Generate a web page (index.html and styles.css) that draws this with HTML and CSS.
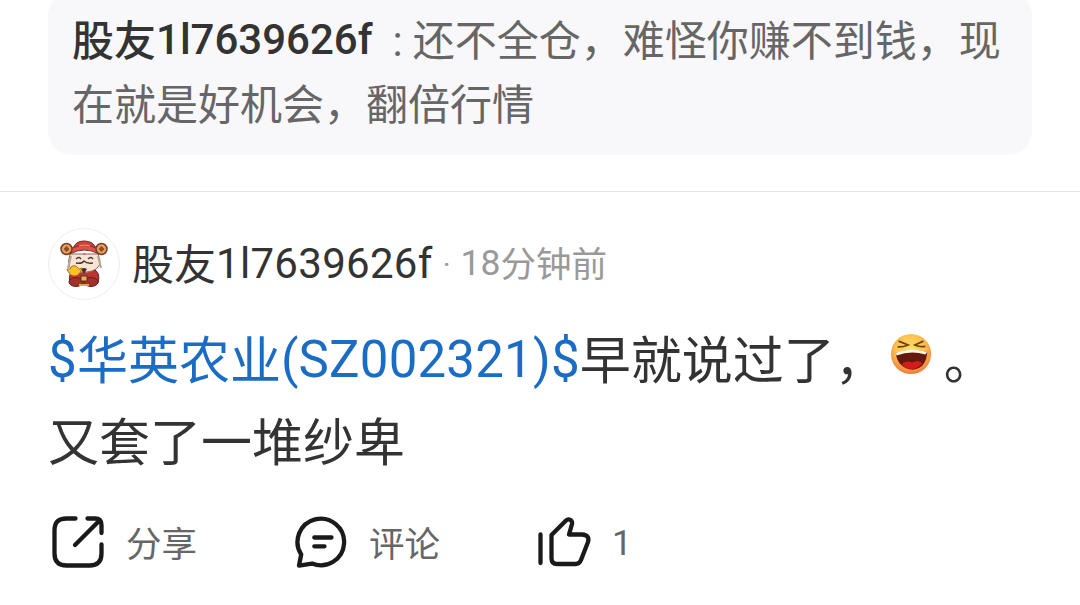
FILE: index.html
```html
<!DOCTYPE html>
<html lang="zh-CN">
  <head>
    <meta charset="UTF-8" />
    <meta name="viewport" content="width=device-width, initial-scale=1.0" />
    <title>股吧评论</title>
    <link rel="stylesheet" href="styles.css">
  </head>
  <body>
    <div class="quote">
      <p><span class="quote-name">股友</span><span class="quote-name num">1l7639626f</span><span class="colon">:</span><span>还不全仓，难怪你赚不到钱，现在就是好机会，翻倍行情</span></p>
    </div>

    <div class="post">
      <div class="user">
        <div class="avatar">
          <svg width="72" height="72" viewBox="0 0 72 72">
            <!-- body -->
            <path d="M25 42Q20 46 22 55L27 57L45 57L50 55Q53 44 45 41Z" fill="#b9372f" stroke="#5c2522" />
            <ellipse cx="28" cy="54" rx="7" ry="4.500" fill="#a52f2b" stroke="#5c2522" />
            <ellipse cx="43" cy="54" rx="7" ry="4.500" fill="#a52f2b" stroke="#5c2522" />
            <rect x="33" y="48" width="6" height="5" fill="#e4b35b" stroke="#603121" />
            <path d="M31 57h10" stroke="#e0a050" stroke-width="2" />
            <!-- head -->
            <path d="M22 26Q17 42 29 43Q36 46 44 43Q56 39 50 26Z" fill="#fbe4d4" stroke="#8a6a60" />
            <path d="M23 28L20 40M50 28L53 40" stroke="#b5a49c" stroke-width="2" />
            <path d="M28 31q3-3 5 0M40 31q3-3 5 0M28 35q6 1 8-2q3 3 9 2" fill="none" stroke="#4f3835" stroke-width="1.4" />
            <circle cx="36.500" cy="26" r="1" fill="#d85042" />
            <path d="M33 41q3-2 6 0l-3 5z" fill="#453032" />
            <!-- hat -->
            <path d="M25 21Q27 13 36 13Q46 13 48 21Z" fill="#c9423b" stroke="#6e2925" />
            <path d="M22 26Q36 18 51 26L49 20Q36 15 24 20Z" fill="#dc5149" stroke="#792f29" />
            <path d="M31 18q6-2 11 0" fill="none" stroke="#edaa68" />
            <circle cx="18.500" cy="21" r="5.500" fill="#e8a254" stroke="#713b2b" stroke-width="1.500" />
            <circle cx="53.500" cy="21" r="5.500" fill="#e8a254" stroke="#713b2b" stroke-width="1.500" />
            <path d="M18.500 18l3 3l-3 3l-3-3zM53.500 18l3 3l-3 3l-3-3z" fill="#8c4b2d" />
            <!-- gold ingot -->
            <path d="M19 41Q23 42 23 39Q27 36 30 40Q31 42 34 40Q32 48 26 48Q21 47 19 41Z" fill="#f5c527" stroke="#a66d1d" />
          </svg>
        </div>
        <span class="name">股友<span class="num">1l7639626f</span></span>
        <span class="dot">·</span>
        <span class="time"><span class="num">18</span>分钟前</span>
      </div>

      <p class="content"><a class="stock"><span class="code">$</span>华英农业<span class="code">(SZ002321)$</span></a>早就说过了，<svg class="emoji" width="42" height="42" viewBox="0 0 44 44">
          <defs>
            <radialGradient id="face" cx="48%" cy="38%" r="62%">
              <stop offset="0" stop-color="#ffdc68" />
              <stop offset="0.600" stop-color="#fbc04f" />
              <stop offset="1" stop-color="#f2793d" />
            </radialGradient>
          </defs>
          <circle cx="22" cy="22" r="21" fill="url(#face)" />
          <path d="M9 8.500L19 12.500Q13 15 8 14.500M35 8.500L26 12.500Q31 15 37 14" fill="none" stroke="#6b4012" stroke-width="1.800" />
          <path d="M6 21Q22 15 39 20Q38 37 24 38.500Q8 37 6 21Z" fill="#65180c" />
          <path d="M6 21Q22 14 39 20L37 22.500Q22 18 7 23.500Z" fill="#fff4dc" />
          <path d="M12 33Q17 28 23 31Q30 27 34 32Q23 43 12 33Z" fill="#d21e1b" />
        </svg>。<br>又套了一堆纱卑</p>

      <div class="actions">
        <div class="action">
          <svg width="52" height="52" viewBox="0 0 52 52">
            <path d="M23.500 2.500H14.500Q2.500 2.500 2.500 14.500V37.500Q2.500 49.500 14.500 49.500H37.500Q49.500 49.500 49.500 37.500V28.500M35.500 2.500H43Q49.500 2.500 49.500 9V17M47.500 4.500L23 29" />
          </svg>
          <span>分享</span>
        </div>
        <div class="action">
          <svg width="52" height="52" viewBox="0 0 52 52">
            <path d="M4 49.500L6.200 38.500A23.300 23.300 0 1 1 17 47.500Z" />
            <path d="M19.300 21.500H36.500M19.300 30.300H29.500" />
          </svg>
          <span>评论</span>
        </div>
        <div class="action">
          <svg width="52" height="52" viewBox="0 0 52 52">
            <path d="M2.500 18.500V47M13.500 19L28 4.500Q30 2.500 32.500 4Q34.500 5.500 34 8L31 18.500H44Q52 19 50 26L43 44Q41.500 48 37.500 48H19Q13.500 48 13.500 42Z" />
          </svg>
          <span class="count">1</span>
        </div>
      </div>
    </div>
  </body>
</html>
```

FILE: styles.css
```css
* {
  margin: 0;
  padding: 0;
  box-sizing: border-box;
}
body {
  background: #fff;
  color: #333;
  font-family: Roboto, "Noto Sans CJK SC", sans-serif;
  overflow: hidden;
}
.quote {
  height: 163px;
  margin: -8px 48px 0;
  padding: 18px 24px 0;
  background: #f8f8fa;
  border-radius: 24px;
  color: #666;
  font-size: 42px;
  line-height: 64px;
}
.quote-name {
  color: #333;
  font-weight: 500;
}
.num {
  line-height: 1;
  vertical-align: 2px;
}
.colon {
  margin: 0 10px 0 20px;
}
.post {
  margin-top: 36px;
  padding: 36px 48px 0;
  border-top: 1px solid #e3e3e3;
}
.user {
  display: flex;
  align-items: center;
  height: 72px;
}
.avatar {
  width: 72px;
  height: 72px;
  border: 1px solid #eee;
  border-radius: 50%;
  overflow: hidden;
}
.avatar svg {
  display: block;
  margin: -1px;
}
.name {
  margin-left: 12px;
  padding-bottom: 6px;
  font-size: 42px;
}
.name .num {
  letter-spacing: 0.3px;
}
.dot {
  margin: 0 10px;
  color: #999;
  font-size: 30px;
}
.time {
  padding-bottom: 5px;
  color: #999;
  font-size: 35.5px;
}
.content {
  margin-top: 21px;
  font-size: 51px;
  line-height: 82px;
  white-space: nowrap;
}
.stock {
  color: #1a6cc4;
}
.code {
  letter-spacing: 0.2px;
  line-height: 1;
  vertical-align: 2px;
}
.emoji {
  margin: 0 12px 0 4px;
  vertical-align: 4px;
}
.actions {
  display: flex;
  margin-top: 31px;
  padding-left: 4px;
}
.action {
  display: flex;
  align-items: center;
  width: 243px;
  height: 52px;
  color: #666;
  font-size: 35.5px;
}
.action span {
  padding-bottom: 2px;
}
.action .count {
  padding: 2px 0 0;
}
.action svg {
  margin-right: 22px;
  fill: none;
  stroke: #1a1a1a;
  stroke-width: 4.3;
  stroke-linecap: round;
  stroke-linejoin: round;
  overflow: visible;
}
```
